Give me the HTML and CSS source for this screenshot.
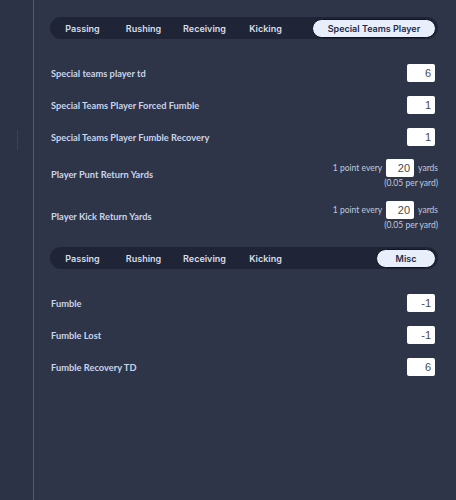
FILE: index.html
```html
<!DOCTYPE html>
<html lang="en">
<head>
    <meta charset="UTF-8">
    <meta name="viewport" content="width=device-width, initial-scale=1.0">
    <title>Scoring Settings</title>
    <link rel="stylesheet" href="styles.css">
</head>
<body>
    <div class="layout">
        <div class="sidebar">
            <div class="sidebar-mark"></div>
        </div>

        <div class="main">
            <div class="tabs">
                <span class="tab">Passing</span>
                <span class="tab">Rushing</span>
                <span class="tab">Receiving</span>
                <span class="tab">Kicking</span>
                <span class="tab active wide">Special Teams Player</span>
            </div>

            <div class="settings">
                <div class="row">
                    <span class="label">Special teams player td</span>
                    <input class="num" type="text" value="6">
                </div>
                <div class="row">
                    <span class="label">Special Teams Player Forced Fumble</span>
                    <input class="num" type="text" value="1">
                </div>
                <div class="row">
                    <span class="label">Special Teams Player Fumble Recovery</span>
                    <input class="num" type="text" value="1">
                </div>
                <div class="row rate-row">
                    <span class="label">Player Punt Return Yards</span>
                    <div class="rate">
                        <div class="rate-line">
                            <span>1 point every</span>
                            <input class="num" type="text" value="20">
                            <span>yards</span>
                        </div>
                        <div class="rate-note">(0.05 per yard)</div>
                    </div>
                </div>
                <div class="row rate-row">
                    <span class="label">Player Kick Return Yards</span>
                    <div class="rate">
                        <div class="rate-line">
                            <span>1 point every</span>
                            <input class="num" type="text" value="20">
                            <span>yards</span>
                        </div>
                        <div class="rate-note">(0.05 per yard)</div>
                    </div>
                </div>
            </div>

            <div class="tabs">
                <span class="tab">Passing</span>
                <span class="tab">Rushing</span>
                <span class="tab">Receiving</span>
                <span class="tab">Kicking</span>
                <span class="tab active narrow">Misc</span>
            </div>

            <div class="settings">
                <div class="row">
                    <span class="label">Fumble</span>
                    <input class="num" type="text" value="-1">
                </div>
                <div class="row">
                    <span class="label">Fumble Lost</span>
                    <input class="num" type="text" value="-1">
                </div>
                <div class="row">
                    <span class="label">Fumble Recovery TD</span>
                    <input class="num" type="text" value="6">
                </div>
            </div>
        </div>
    </div>
</body>
</html>
```

FILE: styles.css
```css
html, body {
    margin: 0;
    padding: 0;
    height: 100%;
}

body {
    background: #2e3549;
    font-family: Lato, "Noto Sans", sans-serif;
    color: #c8d4ea;
}

.layout {
    display: flex;
    min-height: 100%;
}

.sidebar {
    width: 33px;
    flex-shrink: 0;
    border-right: 1px solid #4f5b74;
    background: #2c3346;
    position: relative;
}

.sidebar-mark {
    position: absolute;
    left: 17px;
    top: 130px;
    width: 1px;
    height: 20px;
    background: #3a4256;
}

.main {
    flex: 1;
    padding: 17px 18px 0 16px;
}

.tabs {
    display: flex;
    align-items: center;
    height: 22px;
    padding: 0 2px;
    background: #1f2536;
    border-radius: 11px;
}

.tab {
    width: 61px;
    text-align: center;
    font-family: Inter, "Open Sans", sans-serif;
    font-weight: 600;
    font-size: 9px;
    color: #d8dde8;
}

.tab.active {
    margin-left: auto;
    height: 17px;
    line-height: 17px;
    background: #e8effa;
    color: #1f2a48;
    border: 1px solid #10141f;
    border-radius: 10px;
    font-size: 9px;
}

.tab.wide {
    width: 122px;
}

.tab.narrow {
    width: 58px;
}

.settings {
    padding: 18px 0 10px 1px;
}

.row {
    display: flex;
    justify-content: space-between;
    align-items: center;
    height: 32px;
}

.label {
    font-weight: 700;
    font-size: 9.3px;
    color: #c8d4ea;
}

.row > .num {
    margin-right: 3px;
}

.num {
    box-sizing: border-box;
    width: 28px;
    height: 18px;
    padding: 0 4px;
    border: none;
    border-radius: 2px;
    background: #ffffff;
    color: #4a4a4a;
    text-align: right;
    font-family: "Liberation Sans", Arial, sans-serif;
    font-size: 11px;
}

.rate-row {
    height: auto;
    padding: 6px 0 5px;
}

.rate {
    display: flex;
    flex-direction: column;
    align-items: flex-end;
    font-size: 8.5px;
    color: #c0cadb;
}

.rate-line {
    display: flex;
    align-items: center;
    gap: 4px;
}

.rate-note {
    line-height: 13px;
}
```
